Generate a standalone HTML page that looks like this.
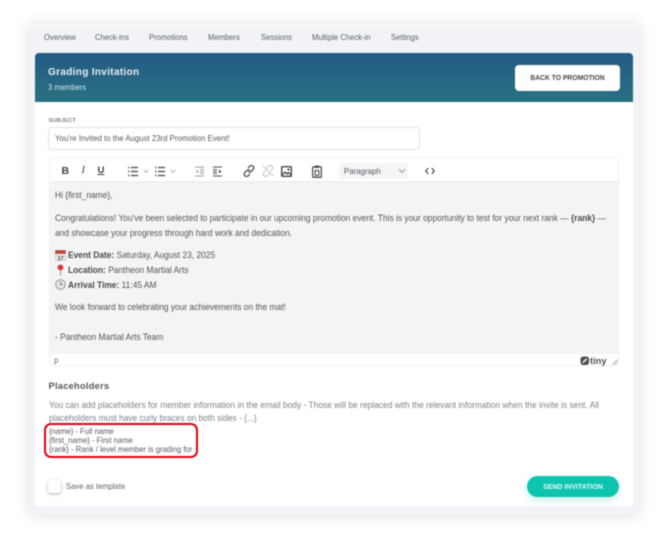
<!DOCTYPE html>
<html><head><meta charset="utf-8">
<style>
html,body{margin:0;padding:0;background:#fff}
#p{position:relative;width:670px;height:537px;overflow:hidden;background:#fff;font-family:"Liberation Sans",sans-serif;filter:blur(.42px)}
#p div,#p svg{position:absolute}
.t{white-space:nowrap;transform-origin:0 50%}
.tab{top:32px;font-size:8.4px;line-height:11px;color:#5b6169;white-space:nowrap;transform:scaleX(.91);transform-origin:0 50%}
.b{font-size:8.9px;line-height:12px;color:#555;left:55px;white-space:nowrap;transform:scaleX(.948);transform-origin:0 50%}
.b b{color:#4a4a4a}
.ph{left:48.500px;font-size:8.5px;line-height:9px;color:#555b62;white-space:nowrap;transform:scaleX(.9);transform-origin:0 50%}
svg.i{fill:none;stroke:#5a6068;stroke-width:1.1}
</style></head><body>
<div id="p">
<div style="left:29px;top:24px;width:610px;height:491px;background:#f1f3f7;box-shadow:0 0 14px rgba(0,0,0,.13)"></div>
<div style="left:29px;top:24px;width:610px;height:5px;background:#f6f7f9"></div>
<div class="tab" style="left:44px">Overview</div>
<div class="tab" style="left:95px">Check-ins</div>
<div class="tab" style="left:148.500px">Promotions</div>
<div class="tab" style="left:208px">Members</div>
<div class="tab" style="left:261px">Sessions</div>
<div class="tab" style="left:311.500px">Multiple Check-in</div>
<div class="tab" style="left:391px">Settings</div>

<div style="left:35px;top:53px;width:598px;height:453px;background:#fff;border-radius:4px"></div>
<div style="left:35px;top:53px;width:598px;height:49px;background:linear-gradient(#235b85,#2a7183);border-radius:4px 4px 0 0"></div>
<div class="t" style="left:48px;top:66px;font-size:10px;line-height:14px;font-weight:bold;letter-spacing:.33px;color:#e6eef2">Grading Invitation</div>
<div class="t" style="left:48px;top:82px;font-size:8.2px;line-height:11px;color:#d5e3e9;transform:scaleX(.93)">3 members</div>
<div style="left:515px;top:65px;width:105px;height:26px;background:#fff;border-radius:4px"></div>
<div class="t" style="left:515px;top:65px;width:105px;text-align:center;font-size:7.400px;line-height:26px;font-weight:bold;color:#41484f;transform:scaleX(.915);transform-origin:50% 50%">BACK TO PROMOTION</div>

<div class="t" style="left:48.500px;top:117.200px;font-size:5.900px;line-height:8px;font-weight:bold;color:#80868c">SUBJECT</div>
<div style="left:48px;top:127px;width:370px;height:21px;border:1px solid #dfe2ec;border-radius:3px;background:#fff"></div>
<div class="t" style="left:55px;top:132px;font-size:8.600px;line-height:12px;color:#555a60;transform:scaleX(.91)">You're Invited to the August 23rd Promotion Event!</div>

<!-- editor -->
<div style="left:49px;top:157px;width:570px;height:209px;border:1px solid #eff0f2;border-radius:5px;background:#fff;box-sizing:border-box"></div>
<div style="left:50px;top:183px;width:568px;height:171px;background:#f4f4f4"></div>
<div style="left:50px;top:181px;width:568px;height:2px;background:#f0f0f0"></div>

<!-- toolbar -->
<div class="t" style="left:61.500px;top:165px;font-size:10.500px;line-height:12px;font-weight:bold;color:#3c4045">B</div>
<div class="t" style="left:81.500px;top:165px;font-size:10.500px;line-height:12px;font-style:italic;font-family:'Liberation Serif',serif;color:#3c4045">I</div>
<div class="t" style="left:97.500px;top:164.500px;font-size:9.500px;line-height:12px;font-weight:bold;color:#3c4045;text-decoration:underline">U</div>
<svg class="i" style="left:128px;top:166px;stroke-width:1.400" width="24" height="11" viewBox="0 0 24 11"><path d="M0 1.500h1.500M3 1.500h7M0 5.500h1.500M3 5.500h7M0 9.500h1.500M3 9.500h7"/><path d="M15.500 4l2.500 2.500L20.500 4" stroke="#9aa0a6" stroke-width=".8"/></svg>
<svg class="i" style="left:155px;top:166px;stroke-width:1.400" width="24" height="11" viewBox="0 0 24 11"><path d="M0 1.500h1.500M3 1.500h7M0 5.500h1.500M3 5.500h7M0 9.500h1.500M3 9.500h7"/><path d="M15.500 4l2.500 2.500L20.500 4" stroke="#9aa0a6" stroke-width=".8"/></svg>
<svg class="i" style="left:195px;top:166px;stroke:#9a9ea3" width="10" height="11" viewBox="0 0 10 11"><path d="M0 1h9M5 3.500h4M5 5.500h4M5 7.500h4M0 10h9"/><path d="M3 3.500L.8 5.500 3 7.500z" fill="#9a9ea3" stroke="none"/></svg>
<svg class="i" style="left:213px;top:166px;stroke:#4c5158" width="10" height="11" viewBox="0 0 10 11"><path d="M0 1h9M0 3.500h4M0 5.500h4M0 7.500h4M0 10h9"/><path d="M6 3.500L8.500 5.500 6 7.500z" fill="#4c5158" stroke="none"/></svg>
<svg class="i" style="left:243px;top:165px;stroke-width:1.500" width="12" height="12" viewBox="0 0 12 12"><path d="M5 3l1.800-1.800a2.300 2.300 0 013.300 3.300L8.300 6.300a2.300 2.300 0 01-3 .2M7 9l-1.800 1.800a2.300 2.300 0 01-3.300-3.300L3.700 5.700a2.300 2.300 0 013-.2"/></svg>
<svg class="i" style="left:262px;top:165px;stroke:#b3b6ba;stroke-width:1.300;stroke-dasharray:1.500 .7" width="12" height="12" viewBox="0 0 12 12"><path d="M5 3l1.800-1.800a2.300 2.300 0 013.300 3.300L8.300 6.300M7 9l-1.800 1.800a2.300 2.300 0 01-3.300-3.300L3.700 5.700M1 1l10 10"/></svg>
<svg class="i" style="left:281px;top:165.500px;stroke:#43484e" width="11" height="11" viewBox="0 0 11 11"><rect x=".7" y=".7" width="9.600" height="9.600" rx=".6" stroke-width="1.400"/><path d="M1 9l3-3 2 2 1.500-1.500L10 9" stroke-width="1.300"/><circle cx="7.500" cy="3.500" r="1.100" fill="#43484e" stroke="none"/></svg>
<svg class="i" style="left:312px;top:164.500px;stroke:#4c5158" width="10" height="13" viewBox="0 0 10 13"><rect x=".7" y="1.800" width="8.600" height="10.500" rx=".8" stroke-width="1.300"/><rect x="3" y=".5" width="4" height="2.500" fill="#4c5158" stroke="none"/><rect x="3.200" y="5.500" width="3.600" height="4.800" stroke-width="1.100"/></svg>
<div style="left:339px;top:163px;width:69px;height:16px;background:#f4f5f6;border-radius:2px"></div>
<div class="t" style="left:343.500px;top:165px;font-size:8.300px;line-height:12px;color:#53585e;transform:scaleX(.95)">Paragraph</div>
<svg class="i" style="left:398px;top:168px;stroke:#8b9096;stroke-width:.9" width="8" height="6" viewBox="0 0 8 6"><path d="M1 1.500l3 3 3-3"/></svg>
<svg class="i" style="left:425px;top:167px;stroke:#45494f;stroke-width:1.200" width="10" height="8" viewBox="0 0 10 8"><path d="M3.200 1L.8 4l2.400 3M6.800 1l2.400 3-2.400 3"/></svg>

<!-- body -->
<div class="b" style="top:189px">Hi {first_name},</div>
<div class="b" style="top:212px">Congratulations! You've been selected to participate in our upcoming promotion event. This is your opportunity to test for your next rank — <b>{rank}</b> —</div>
<div class="b" style="top:227px">and showcase your progress through hard work and dedication.</div>
<svg style="left:55px;top:249.500px" width="11" height="11" viewBox="0 0 11 11"><rect x=".3" y=".3" width="10.400" height="10.400" rx="1" fill="#e8e8e8" stroke="#aaa" stroke-width=".4"/><rect x=".3" y=".3" width="10.400" height="3.500" fill="#b8453e"/><text x="5.500" y="9.800" font-size="5.500" font-weight="bold" text-anchor="middle" fill="#444" font-family="Liberation Sans">17</text></svg>
<div class="b" style="top:249px;left:68.300px"><b>Event Date:</b> Saturday, August 23, 2025</div>
<svg style="left:56px;top:263.500px" width="9" height="12" viewBox="0 0 9 12"><path d="M4.500 5.500L4.500 11.800" stroke="#9b9b9b" stroke-width="1"/><circle cx="4.500" cy="3.400" r="2.900" fill="#d8383a"/></svg>
<div class="b" style="top:264px;left:68.300px"><b>Location:</b> Pantheon Martial Arts</div>
<svg style="left:55px;top:278.500px" width="11" height="11" viewBox="0 0 11 11"><circle cx="5.500" cy="5.500" r="4.800" fill="#e4e6e8" stroke="#8a8f94" stroke-width=".9"/><path d="M5.500 2.500v3.200h2.500" fill="none" stroke="#666" stroke-width=".8"/></svg>
<div class="b" style="top:279px;left:68.300px"><b>Arrival Time:</b> 11:45 AM</div>
<div class="b" style="top:301px">We look forward to celebrating your achievements on the mat!</div>
<div class="b" style="top:331px">- Pantheon Martial Arts Team</div>

<!-- status -->
<div class="t" style="left:54px;top:355px;font-size:8px;line-height:11px;color:#6c7076">p</div>
<svg style="left:580px;top:356px" width="9.500" height="9.500" viewBox="0 0 10 10"><rect x=".5" y=".5" width="9" height="9" rx="3" fill="#4a4f55"/><path d="M3 7L7 3" stroke="#f4f4f4" stroke-width="1.600"/></svg>
<div class="t" style="left:590px;top:354.500px;font-size:9.300px;line-height:12px;font-weight:bold;color:#4d5258">tiny</div>
<svg style="left:612px;top:359px" width="6" height="6" viewBox="0 0 6 6"><path d="M5.500 .5L.5 5.500M5.500 3L3 5.500" stroke="#9a9ea3" stroke-width=".8"/></svg>

<!-- placeholders -->
<div class="t" style="left:48.500px;top:379.500px;font-size:9.300px;line-height:13px;font-weight:bold;letter-spacing:.25px;color:#53585f">Placeholders</div>
<div class="t" style="left:48.500px;top:399px;font-size:8.800px;line-height:13px;color:#7d8288;transform:scaleX(.958)">You can add placeholders for member information in the email body - Those will be replaced with the relevant information when the invite is sent. All</div>
<div class="t" style="left:48.500px;top:411.500px;font-size:8.800px;line-height:13px;color:#7d8288;transform:scaleX(.95)">placeholders must have curly braces on both sides - {...}</div>
<div class="ph" style="top:426.800px">{name} - Full name</div>
<div class="ph" style="top:436px">{first_name} - First name</div>
<div class="ph" style="top:445px">{rank} - Rank / level member is grading for</div>
<div style="left:44px;top:423px;width:154px;height:35px;box-sizing:border-box;border:2.500px solid #e2000f;border-radius:7px"></div>

<!-- footer -->
<div style="left:48px;top:480px;width:13px;height:12.500px;background:#fff;border-radius:3px;box-shadow:0 1px 3px rgba(0,0,0,.3)"></div>
<div class="t" style="left:65.500px;top:480px;font-size:8.400px;line-height:12px;color:#60656b;transform:scaleX(.915)">Save as template</div>
<div style="left:527px;top:476px;width:92px;height:21px;border-radius:11px;background:#0dc4ae;box-shadow:0 3px 8px rgba(13,196,174,.25)"></div>
<div class="t" style="left:527px;top:476px;width:92px;text-align:center;font-size:7.400px;line-height:21px;font-weight:bold;color:#e4faf6;transform:scaleX(.945);transform-origin:50% 50%">SEND INVITATION</div>
</div>
</body></html>
